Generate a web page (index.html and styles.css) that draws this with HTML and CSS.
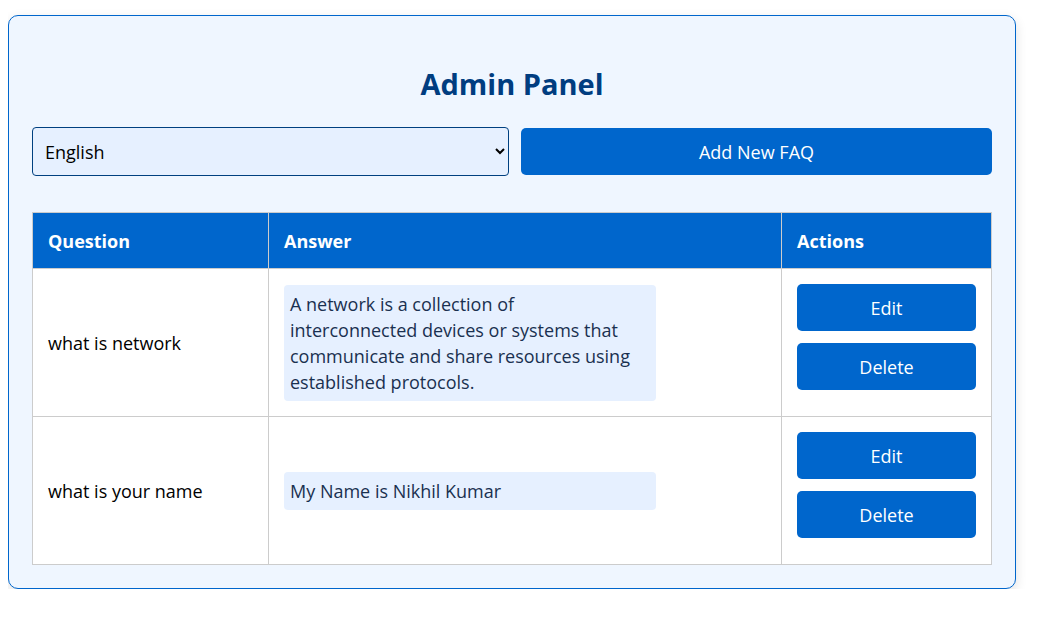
FILE: index.html
```html
<!DOCTYPE html>
<html lang="en">
<head>
<meta charset="utf-8">
<title>Admin Panel</title>
<link rel="stylesheet" href="styles.css">
</head>
<body>
<div class="panel">
  <h1 class="title">Admin Panel</h1>
  <div class="controls">
    <select class="lang">
      <option>English</option>
      <option>Hindi</option>
    </select>
    <button class="btn add">Add New FAQ</button>
  </div>
  <table class="faq">
    <thead>
      <tr>
        <th class="c-q">Question</th>
        <th class="c-a">Answer</th>
        <th class="c-x">Actions</th>
      </tr>
    </thead>
    <tbody>
      <tr>
        <td>what is network</td>
        <td><div class="answer">A network is a collection of interconnected devices or systems that communicate and share resources using established protocols.</div></td>
        <td><button class="btn act">Edit</button><button class="btn act">Delete</button></td>
      </tr>
      <tr>
        <td>what is your name</td>
        <td><div class="answer">My Name is Nikhil Kumar</div></td>
        <td><button class="btn act">Edit</button><button class="btn act">Delete</button></td>
      </tr>
    </tbody>
  </table>
</div>
</body>
</html>
```

FILE: styles.css
```css
* { box-sizing: border-box; }
body {
  margin: 8px;
  background: #ffffff;
  font-family: "Open Sans", "Noto Sans", sans-serif;
  color: #000;
}
.panel {
  width: 1008px;
  margin-top: 7px;
  background: #eff6ff;
  border: 1px solid #0066cc;
  border-radius: 10px;
  padding: 23px;
  box-shadow: 0 4px 12px rgba(0, 0, 0, 0.12);
}
.title {
  margin: 28px 0 26px;
  text-align: center;
  font-size: 29px;
  line-height: 34px;
  font-weight: 700;
  color: #003d80;
}
.controls {
  display: flex;
  align-items: center;
  gap: 12px;
  margin-bottom: 36px;
}
.lang {
  flex: 1;
  height: 49px;
  padding: 0 8px;
  font-family: inherit;
  font-size: 18px;
  color: #000;
  background: #e6f0ff;
  border: 1px solid #004080;
  border-radius: 4px;
}
.btn {
  font-family: inherit;
  font-size: 18px;
  color: #fff;
  background: #0066cc;
  border: none;
  border-radius: 5px;
  cursor: pointer;
}
.add {
  flex: 1;
  height: 47px;
}
.faq {
  width: 100%;
  border-collapse: collapse;
  background: #fff;
}
.faq th, .faq td {
  border: 1px solid #cccccc;
  padding: 15px 15px 14px;
  text-align: left;
  vertical-align: middle;
  font-size: 18px;
}
.faq th {
  background: #0066cc;
  color: #fff;
  font-weight: 700;
  height: 56px;
}
.c-q { width: 236px; }
.c-a { width: 513px; }
.answer {
  max-width: 372px;
  padding: 6px 22px 6px 6px;
  background: #e6f0ff;
  border-radius: 4px;
  color: #1a3050;
  line-height: 26px;
}
.act {
  display: block;
  width: 100%;
  height: 47px;
  margin: 0 0 12px;
}
```
